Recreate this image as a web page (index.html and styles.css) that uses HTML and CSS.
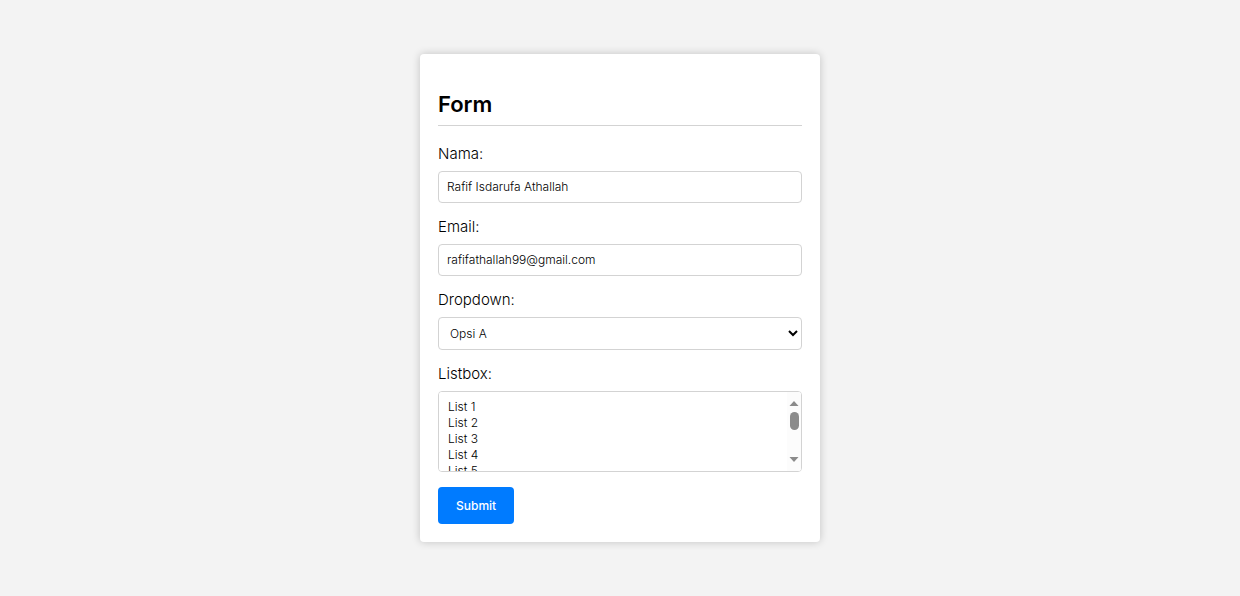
FILE: index.html
```html
<!DOCTYPE html>
<html lang="id">
<head>
<meta charset="utf-8">
<meta name="viewport" content="width=device-width, initial-scale=1">
<title>Form</title>
<link rel="stylesheet" href="styles.css">
</head>
<body>
<main class="card">
  <h1 class="title">Form</h1>
  <form class="form">
    <div class="field">
      <label class="label" for="nama">Nama:</label>
      <input class="control" type="text" id="nama" name="nama" value="Rafif Isdarufa Athallah" spellcheck="false">
    </div>
    <div class="field">
      <label class="label" for="email">Email:</label>
      <input class="control" type="email" id="email" name="email" value="rafifathallah99@gmail.com">
    </div>
    <div class="field">
      <label class="label" for="dropdown">Dropdown:</label>
      <select class="control dropdown" id="dropdown" name="dropdown">
        <option>Opsi A</option>
        <option>Opsi B</option>
        <option>Opsi C</option>
      </select>
    </div>
    <div class="field">
      <label class="label" for="listbox">Listbox:</label>
      <div class="list-wrap">
        <select class="control listbox" id="listbox" name="listbox" multiple>
          <option>List 1</option>
          <option>List 2</option>
          <option>List 3</option>
          <option>List 4</option>
          <option>List 5</option>
          <option>List 6</option>
          <option>List 7</option>
          <option>List 8</option>
          <option>List 9</option>
          <option>List 10</option>
        </select>
        <div class="scrollbar" aria-hidden="true">
          <svg class="arrow" viewBox="0 0 10 5"><path d="M5 0 9.500 5H.5z"/></svg>
          <span class="thumb"></span>
          <svg class="arrow arrow-down" viewBox="0 0 10 5"><path d="M.5 0h9L5 5z"/></svg>
        </div>
      </div>
    </div>
    <button class="submit" type="submit">Submit</button>
  </form>
</main>
</body>
</html>
```
FILE: styles.css
```css
* {
  box-sizing: border-box;
}

body {
  display: flex;
  align-items: center;
  justify-content: center;
  min-height: 100vh;
  margin: 0;
  background: #f3f3f3;
  color: #000;
  font-family: Inter, "Liberation Sans", sans-serif;
}

.card {
  width: 100%;
  max-width: 400px;
  padding: 36px 18px 18px;
  border-radius: 4px;
  background: #fff;
  box-shadow: 0 0 9px rgba(0, 0, 0, 0.2);
}

.title {
  margin: 0 0 19px;
  padding-bottom: 7px;
  border-bottom: 1px solid #d3d3d3;
  font-size: 22px;
  font-weight: 600;
  line-height: 28px;
}

.form {
  display: flex;
  flex-direction: column;
  align-items: flex-start;
  gap: 15px;
}

.field {
  display: flex;
  flex-direction: column;
  gap: 8px;
  width: 100%;
}

.label {
  font-size: 15px;
  font-weight: 300;
  line-height: 18px;
}

.control {
  width: 100%;
  height: 32px;
  padding: 0 8px 1px;
  border: 1px solid #d3d3d3;
  border-radius: 4px;
  outline: none;
  background: #fff;
  color: #000;
  font-family: inherit;
  font-size: 12px;
  font-weight: 300;
}

.dropdown {
  height: 33px;
  padding: 0 0 0 7px;
}

.list-wrap {
  position: relative;
  display: flex;
}

.listbox {
  height: 81px;
  padding: 7px;
  scrollbar-width: none;
}

.listbox option {
  min-height: 16px;
  padding: 0 2px;
  font-weight: 300;
  line-height: 16px;
}

/* Scroll track laid over the right edge of the list */
.scrollbar {
  position: absolute;
  top: 1px;
  right: 1px;
  bottom: 1px;
  display: flex;
  flex-direction: column;
  align-items: center;
  width: 14px;
  padding: 9px 0;
  border-radius: 0 3px 3px 0;
  background: #fcfcfc;
  pointer-events: none;
}

.arrow {
  width: 10px;
  height: 5px;
  fill: #8b8b8b;
}

.thumb {
  width: 9px;
  height: 18px;
  margin-top: 6px;
  border-radius: 5px;
  background: #8b8b8b;
}

.arrow-down {
  margin-top: auto;
}

.submit {
  height: 37px;
  padding: 0 18px;
  border: 0;
  border-radius: 4px;
  background: #007bff;
  color: #fff;
  font-family: inherit;
  font-size: 12px;
  font-weight: 500;
  cursor: pointer;
}
```
